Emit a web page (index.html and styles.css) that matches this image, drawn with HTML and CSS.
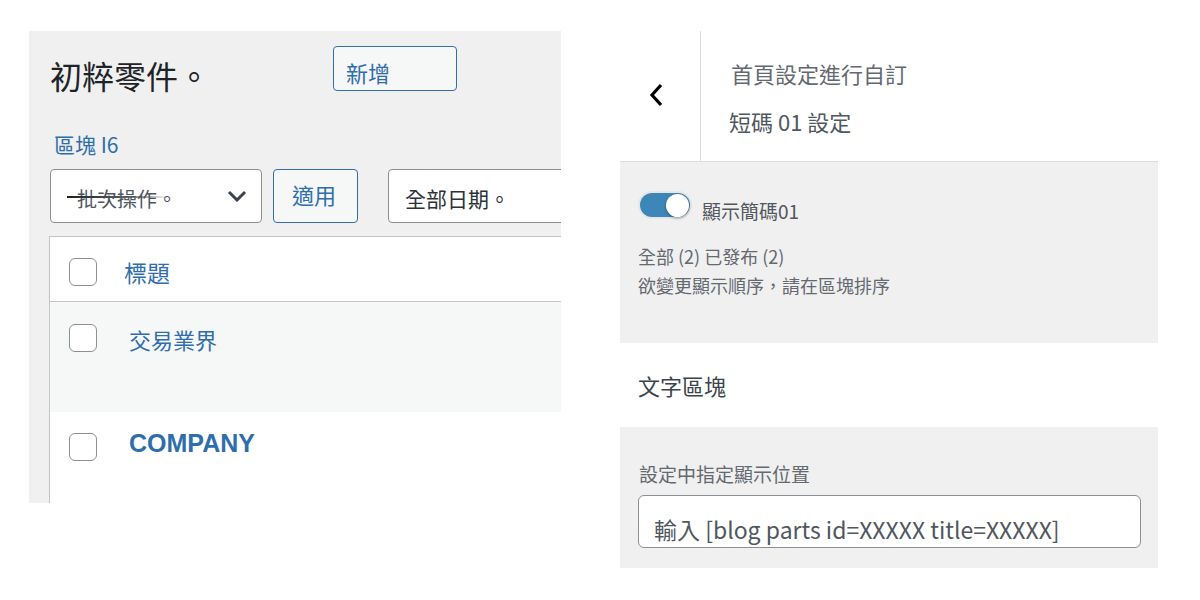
FILE: index.html
```html
<!DOCTYPE html>
<html lang="zh-Hant">
<head>
    <meta charset="UTF-8">
    <meta name="viewport" content="width=device-width, initial-scale=1.0">
    <title>初粹零件</title>
    <link rel="stylesheet" href="styles.css">
</head>
<body>
    <div class="screen">
        <!-- parts list -->
        <div class="parts">
            <div class="page-head">
                <h1 class="page-title">初粹零件。</h1>
                <a class="btn add-new">新增</a>
            </div>

            <a class="count">區塊 I6</a>

            <div class="toolbar">
                <div class="select bulk">
                    <span class="bulk-label">批次操作。</span>
                    <svg class="caret" width="20" height="12" viewBox="0 0 20 12">
                        <path d="M2 2 L10 10 L18 2" fill="none" stroke="#3c434a" stroke-width="3"/>
                    </svg>
                </div>
                <a class="btn apply">適用</a>
                <div class="select dates">全部日期。</div>
            </div>

            <div class="list">
                <div class="list-row list-head">
                    <span class="check"></span>
                    <a class="col-title">標題</a>
                </div>
                <div class="list-row alt">
                    <span class="check"></span>
                    <a class="row-title">交易業界</a>
                </div>
                <div class="list-row">
                    <span class="check"></span>
                    <a class="row-title company">COMPANY</a>
                </div>
            </div>
        </div>

        <!-- customizer panel -->
        <div class="customizer">
            <div class="cz-head">
                <div class="back">
                    <svg width="16" height="26" viewBox="0 0 16 26">
                        <path d="M13 3 L4 13 L13 23" fill="none" stroke="#000" stroke-width="3.2"/>
                    </svg>
                </div>
                <div class="cz-titles">
                    <div class="cz-crumb">首頁設定進行自訂</div>
                    <div class="cz-name">短碼 01 設定</div>
                </div>
            </div>

            <div class="cz-section">
                <div class="toggle-row">
                    <span class="toggle on"><span class="knob"></span></span>
                    <span class="toggle-label">顯示簡碼01</span>
                </div>
                <p class="cz-note first">全部 (2) 已發布 (2)</p>
                <p class="cz-note">欲變更顯示順序，請在區塊排序</p>
            </div>

            <div class="cz-plain">文字區塊</div>

            <div class="cz-section field">
                <label class="field-label">設定中指定顯示位置</label>
                <div class="text-input">輸入 [blog parts id=XXXXX title=XXXXX]</div>
            </div>
        </div>
    </div>
</body>
</html>
```

FILE: styles.css
```css
body {
    margin: 0;
    background: #ffffff;
    font-family: "Noto Sans CJK TC", "Noto Sans", sans-serif;
    color: #1d2327;
}

.screen {
    display: flex;
    align-items: flex-start;
    padding: 31px 0 0 29px;
}

/* ---------- parts list ---------- */

.parts {
    width: 532px;
    height: 472px;
    padding-left: 21px;
    box-sizing: border-box;
    background: #f0f0f0;
    overflow: hidden;
    flex-shrink: 0;
}

.page-head {
    display: flex;
    align-items: flex-start;
    padding-top: 15px;
}

.page-title {
    width: 283px;
    flex-shrink: 0;
    margin: 12px 0 0;
    font-size: 32px;
    font-weight: 400;
    line-height: 34px;
    color: #1d2327;
}

.btn {
    display: flex;
    align-items: center;
    box-sizing: border-box;
    flex-shrink: 0;
    border: 1px solid #2f6eac;
    border-radius: 4px;
    background: #f6f7f7;
    color: #2f6eac;
}

.add-new {
    width: 124px;
    height: 45px;
    padding: 6px 0 0 12px;
    font-size: 22px;
}

.count {
    display: block;
    margin-top: 39px;
    padding-left: 4px;
    font-size: 21px;
    line-height: 26px;
    color: #2f6eac;
}

.toolbar {
    display: flex;
    margin-top: 12px;
    height: 54px;
}

.select {
    display: flex;
    align-items: center;
    box-sizing: border-box;
    flex-shrink: 0;
    height: 54px;
    border: 1px solid #8c8f94;
    border-radius: 4px;
    background: #fff;
    color: #2c3338;
}

.bulk {
    width: 212px;
    padding: 4px 0 0 26px;
    font-size: 20px;
    color: #50575e;
}

.bulk-label {
    position: relative;
}

/* half-wiped stroke across the placeholder */
.bulk-label::before {
    content: "";
    position: absolute;
    left: -10px;
    top: 12px;
    width: 104px;
    height: 2px;
    background: linear-gradient(to right, #1d2327 0%, #50575e 50%, rgba(255, 255, 255, 0) 100%);
}

.caret {
    margin-left: auto;
    margin-right: 14px;
    margin-top: -4px;
}

.apply {
    width: 85px;
    height: 54px;
    margin-left: 11px;
    padding: 0 0 4px 18px;
    font-size: 22px;
}

.dates {
    width: 220px;
    margin-left: 30px;
    padding: 4px 0 0 16px;
    font-size: 21px;
}

.list {
    width: 620px;
    margin: 13px 0 0 -1px;
    border-top: 1px solid #c3c4c7;
    border-left: 1px solid #c3c4c7;
    background: #fff;
}

.list-row {
    display: flex;
    align-items: flex-start;
    height: 110px;
    padding: 21px 0 0 19px;
    box-sizing: border-box;
}

.list-row.alt {
    background: #f6f7f7;
    padding-top: 22px;
}

.list-head {
    height: 65px;
    border-bottom: 1px solid #c3c4c7;
}

.check {
    width: 28px;
    height: 28px;
    box-sizing: border-box;
    border: 1px solid #8c8f94;
    border-radius: 6px;
    background: #fff;
    flex-shrink: 0;
}

.col-title {
    margin: 0 0 0 27px;
    font-size: 23px;
    line-height: 28px;
    color: #2f6eac;
}

.row-title {
    margin: 1px 0 0 32px;
    font-size: 22px;
    line-height: 28px;
    color: #2f6eac;
}

.row-title.company {
    margin-top: -4px;
    font-family: "Liberation Sans", Arial, sans-serif;
    font-weight: 700;
    font-size: 25px;
}

/* ---------- customizer panel ---------- */

.customizer {
    width: 538px;
    margin-left: 59px;
    color: #50575e;
    flex-shrink: 0;
}

.cz-head {
    display: flex;
    height: 130px;
    border-bottom: 1px solid #dcdcde;
}

.back {
    display: flex;
    align-items: center;
    justify-content: center;
    width: 81px;
    padding: 0 8px 2px 0;
    box-sizing: border-box;
    border-right: 1px solid #dcdcde;
}

.cz-titles {
    padding: 27px 0 0 28px;
}

.cz-crumb {
    font-size: 22px;
    line-height: 30px;
    color: #646970;
    padding-left: 2px;
}

.cz-name {
    margin-top: 18px;
    font-size: 22px;
    line-height: 30px;
    color: #50575e;
}

.cz-section {
    background: #f0f0f0;
    height: 181px;
    box-sizing: border-box;
    padding: 31px 18px 0;
}

.toggle-row {
    display: flex;
    align-items: flex-start;
    padding-left: 2px;
}

.toggle {
    display: flex;
    align-items: center;
    width: 50px;
    height: 24px;
    box-sizing: border-box;
    border-radius: 12px;
    background: #3d87b8;
    box-shadow: 0 0 0 2px #e6e6e6;
    padding: 0 1px;
}

.toggle.on {
    justify-content: flex-end;
}

.knob {
    width: 23px;
    height: 23px;
    border-radius: 50%;
    background: #fff;
    box-shadow: 0 1px 3px rgba(0, 0, 0, 0.35);
}

.toggle-label {
    margin: 6px 0 0 12px;
    font-size: 19px;
    line-height: 24px;
    color: #50575e;
}

.cz-note {
    margin: 0;
    font-size: 18px;
    line-height: 29px;
    color: #646970;
}

.cz-note.first {
    margin-top: 19px;
}

.cz-plain {
    height: 84px;
    display: flex;
    align-items: center;
    padding: 0 18px;
    font-size: 22px;
    color: #3c434a;
}

.cz-section.field {
    height: 141px;
    padding-top: 33px;
}

.field-label {
    display: block;
    padding-left: 1px;
    font-size: 19px;
    line-height: 28px;
    color: #646970;
}

.text-input {
    display: flex;
    align-items: center;
    width: 503px;
    height: 53px;
    margin-top: 7px;
    box-sizing: border-box;
    padding: 14px 0 0 15px;
    border: 1px solid #8c8f94;
    border-radius: 6px;
    background: #fff;
    font-size: 23px;
    color: #50575e;
}
```
